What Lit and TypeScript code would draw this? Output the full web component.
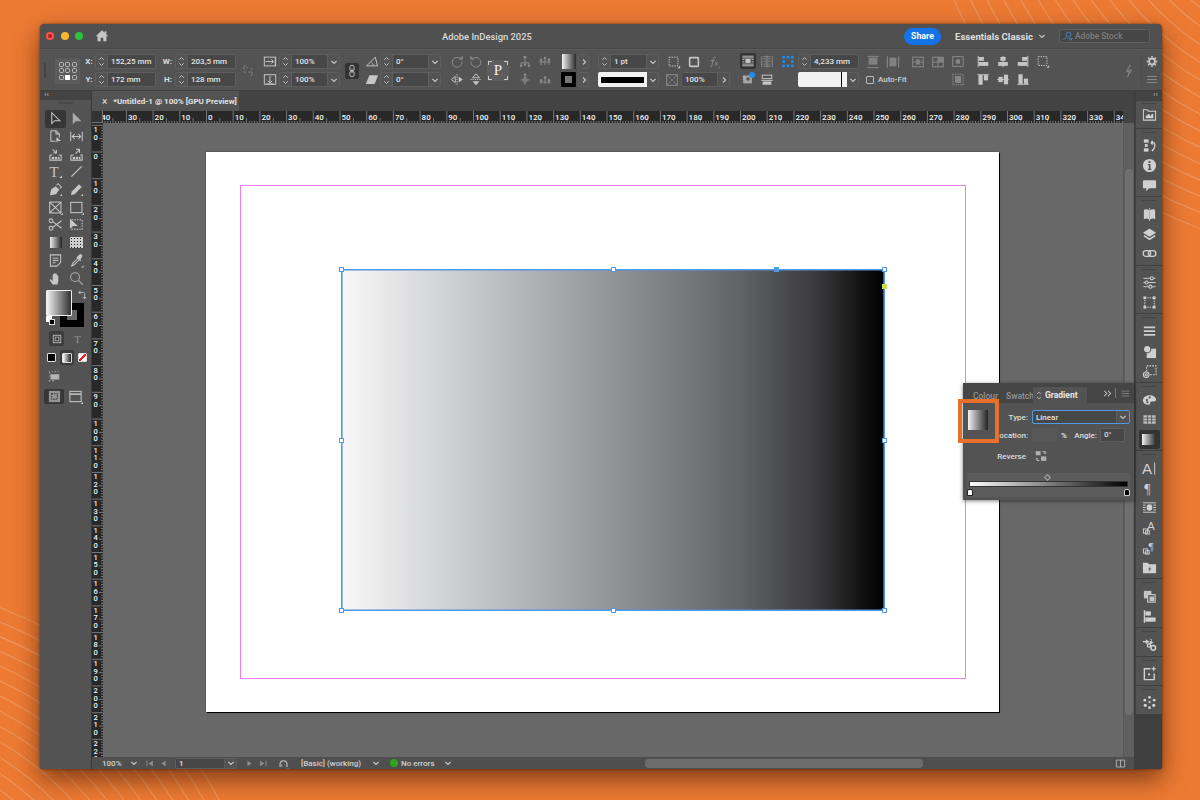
import { css, html, LitElement, svg, type TemplateResult, type SVGTemplateResult } from "lit";
import { customElement } from "lit/decorators.js";

const icons: Record<string, SVGTemplateResult> = {
  home: svg`<path class="f" d="M8 1.5 .8 8.2h2.1V14h3.6v-4h3v4h3.600V8.2h2.100L13 6.200V2.500h-2v1.900z"/>`,
  brokenLink: svg`<path d="M5 2.200 3.400 3.400c-.8.700-.7 1.600 0 2.300l1.200 1.500M7.400 5.600 6 3.600M9 9l1.400 2M11 14l1.600-1.200c.8-.7.700-1.600 0-2.300L11.200 9"/><path d="M3 9.500 5 10M11 6l2 .5"/>`,
  scaleX: svg`<rect x="1.500" y="3" width="13" height="10"/><path d="M3 8h9M9.500 5.500 12 8l-2.500 2.500"/><path d="M14 3v10"/>`,
  scaleY: svg`<rect x="1.500" y="2.500" width="13" height="11"/><path d="M8 4v8M5.500 9.500 8 12l2.500-2.500M4 13h8"/>`,
  chain: svg`<rect x="5.600" y="1.500" width="4.800" height="6.400" rx="2.200"/><rect x="5.600" y="8.100" width="4.800" height="6.400" rx="2.200"/><path d="M8 5.500v5"/>`,
  angle: svg`<path d="M1.800 13h12.400L11.800 3z"/><path d="M9.400 13c0-1.600-.6-2.800-1.800-3.600"/>`,
  shear: svg`<path class="f" d="M5 3h10l-4 10H1z"/>`,
  rotCw: svg`<path d="M12.600 5.600A5.600 5.600 0 1 0 13.600 8"/><path class="f" d="M10 5.800h4.600V1.400z"/>`,
  rotCcw: svg`<path d="M3.400 5.600A5.600 5.600 0 1 1 2.400 8"/><path class="f" d="M6 5.800H1.400V1.400z"/>`,
  flipH: svg`<path d="M6 4.500v7L1.500 8z"/><path class="f" d="M10 4.500v7L14.500 8z"/><path d="M8 2v12" stroke-dasharray="1.400 1.200"/>`,
  flipV: svg`<path d="M4 6h8L8 1.500z"/><path class="f" d="M4 10h8l-4 4.500z"/><path d="M1.500 8h13" stroke-dasharray="1.400 1.200"/>`,
  distA: svg`<circle cx="8" cy="3.200" r="1.700" class="f"/><path d="M8 5v4M3.500 13V9.500h9V13"/><circle cx="3.500" cy="13" r="1.400" class="f"/><circle cx="12.500" cy="13" r="1.400" class="f"/><circle cx="8" cy="11.500" r="1.400" class="f"/>`,
  distB: svg`<path d="M1.500 8.500h13"/><circle cx="3.500" cy="6" r="1.500" class="f"/><circle cx="8" cy="4" r="1.500" class="f"/><circle cx="12.500" cy="6" r="1.500" class="f"/><path d="M3.500 7v5M8 5v7M12.500 7v5"/>`,
  distC: svg`<circle cx="8" cy="2.600" r="1.500" class="f"/><path d="M8 4v10M3 8.500h10"/><circle cx="8" cy="8.500" r="2.600"/>`,
  distD: svg`<path d="M1.500 11h13"/><circle cx="3.500" cy="9" r="1.500" class="f"/><circle cx="8" cy="6" r="1.500" class="f"/><circle cx="12.500" cy="9" r="1.500" class="f"/><path d="M8 7v6M3.500 10v3M12.500 10v3"/>`,
  dashCorner: svg`<rect x="2.500" y="2.500" width="10" height="10" stroke-dasharray="1.600 1.200"/><path class="f" d="M15 15h-3l3-3z"/>`,
  shadowBox: svg`<rect x="3" y="3" width="10" height="10" rx=".8" stroke-width="1.800"/>`,
  fx: svg`<path d="M9.800 2.600C8 2 7.400 3 7 5l-1.400 7c-.3 1.400-1 2-2.300 1.600M4.600 6.500h4.200M9.200 8l3 4M12.200 8l-3 4"/><path class="f" d="M15 15h-2l2-2z"/>`,
  opacity: svg`<rect x="2" y="2" width="12" height="12"/><path d="M2 2l12 12M14 2 2 14" stroke-width=".8"/>`,
  wrapBox: svg`<path d="M1.500 2.500h13M1.500 4.500h13M1.500 6.500h2.500M12 6.500h2.500M1.500 9h2.500M12 9h2.500M1.500 11.500h13M1.500 13.500h13"/><rect class="f" x="5" y="5.600" width="6" height="4.600"/>`,
  wrapNone: svg`<path d="M2 2v12M14 2v12M4 2.500h2M10 2.500h2M4 5h2M10 5h2M4 8h2M10 8h2M4 11h2M10 11h2M4 13.500h2M10 13.500h2"/><rect x="7" y="2" width="2" height="12"/>`,
  tint: svg`<rect class="f" x="2.500" y="4" width="10" height="9" opacity=".72"/><path d="M2 5.500h2M2 8h1" /><circle cx="8" cy="8" r="2" fill="#535353" stroke="none"/>`,
  alignStack: svg`<rect x="2.500" y="3" width="11" height="4"/><path d="M1.500 9h13M3.500 11h9"/><rect class="f" x="3" y="10.500" width="10" height="3.500"/>`,
  fitA: svg`<rect class="f" x="3" y="3" width="10" height="8" opacity=".8"/><path d="M1.500 1.500h13M1.500 14.500h13"/>`,
  fitB: svg`<rect class="f" x="4" y="3" width="8" height="10" opacity=".8"/><path d="M1.500 1.500v13M14.500 1.500v13"/>`,
  fitC: svg`<rect x="2" y="2.500" width="12" height="11"/><rect class="f" x="5.500" y="5" width="5" height="6" opacity=".8"/><path d="M2 8h3M11 8h3"/>`,
  fitD: svg`<rect x="2" y="2.500" width="12" height="11"/><path class="f" d="M8 2.500h6V8H8z" opacity=".8"/><path d="M2 8h12M8 2.500v11"/>`,
  fitE: svg`<rect x="2" y="2.500" width="12" height="11"/><rect class="f" x="5.500" y="5.500" width="5" height="5" opacity=".9"/>`,
  fitF: svg`<rect x="2" y="2" width="12" height="12" stroke-dasharray="1.600 1"/><rect class="f" x="4.500" y="4" width="7" height="8" opacity=".9"/>`,
  alignL: svg`<path d="M2.500 1.500v13"/><rect class="f" x="3" y="2.800" width="6" height="4.400"/><rect class="f" x="3" y="8.600" width="11" height="4.400"/>`,
  alignC: svg`<path d="M8 1.500v13"/><rect class="f" x="5" y="2.800" width="6" height="4.400"/><rect class="f" x="2.500" y="8.600" width="11" height="4.400"/>`,
  alignR: svg`<path d="M13.500 1.500v13"/><rect class="f" x="7" y="2.800" width="6" height="4.400"/><rect class="f" x="2" y="8.600" width="11" height="4.400"/>`,
  alignT: svg`<path d="M1.500 2.500h13"/><rect class="f" x="2.800" y="3" width="4.800" height="11"/><rect class="f" x="9" y="3" width="4.800" height="6"/>`,
  alignM: svg`<path d="M1.500 8h13"/><rect class="f" x="2.800" y="5" width="4.800" height="6"/><rect class="f" x="9" y="2.500" width="4.800" height="11"/>`,
  alignB: svg`<path d="M1.500 13.500h13"/><rect class="f" x="2.800" y="2" width="4.800" height="11"/><rect class="f" x="9" y="7" width="4.800" height="6"/>`,
  bolt: svg`<path d="M9.500 1 5 8.800h3.400L6.600 15M6.500 7 10.800 7 8.600 11"/>`,
  gear: svg`<circle cx="8" cy="8" r="3.400" stroke-width="2.200"/><path stroke-width="1.800" d="M8 1.800v2M8 12.200v2M1.800 8h2M12.200 8h2M3.600 3.600 5 5M11 11l1.400 1.400M3.600 12.400 5 11M11 5l1.400-1.400"/>`,
  menu: svg`<path d="M2.500 4.500h11M2.500 8h11M2.500 11.500h11"/>`,
  search: svg`<circle cx="9.500" cy="5.500" r="3.600"/><path d="M6.800 8.200 2 13M10 11h5l-2.500 2.500z"/>`,
  sel: svg`<path d="M4 1.800v11.600l3-3h5.600z"/>`,
  dsel: svg`<path class="f" d="M4 1.500v12.500l3.200-3.200h6.100z"/>`,
  page: svg`<path d="M3 1.800h5.500L12 5.200V9M3 1.800V13h5"/><path d="M8.500 1.800v3.400H12"/><path class="f" d="M9 8.500v6l1.700-1.600h3.200z"/>`,
  gap: svg`<path d="M1.800 3v10M14.200 3v10M3.500 8h9M6 5.500 3.500 8 6 10.500M10 5.500 12.500 8 10 10.500"/>`,
  collect: svg`<path d="M2 8.500v5.500h12V8.500H11.500M4.500 8.500H2"/><rect class="f" x="4" y="10.500" width="2.400" height="2.400"/><rect class="f" x="7.200" y="10.500" width="2.400" height="2.400"/><rect class="f" x="10.400" y="10.500" width="1.800" height="2.400"/><path d="M5 2.500 9 6.500M9 3v3.500H5.500"/>`,
  place: svg`<path d="M2 8.500v5.500h12V8.500H12M5 8.500H2"/><rect class="f" x="4" y="10.500" width="2.400" height="2.400"/><rect class="f" x="7.200" y="10.500" width="2.400" height="2.400"/><rect class="f" x="10.400" y="10.500" width="1.800" height="2.400"/><path d="M7 7 11 3M7.500 2.500H11.200V6.200"/>`,
  type: svg`<text x="1.500" y="14" class="glyph" font-size="16">T</text><path class="f" d="M15 15h-3l3-3z"/>`,
  line: svg`<path d="M2.500 13.500 13.500 2.500" stroke-width="1.300"/>`,
  pen: svg`<path class="f" d="M2 14l1.400-6.200 5-3.400 3.600 3.600-3.400 5z"/><path d="M9.200 3.400 10.800 1.800l3.400 3.400-1.600 1.600"/><path class="f" d="M15 15h-2.500l2.500-2.500z"/>`,
  pencil: svg`<path class="f" d="M2 14l1-4 7.600-7.600 3 3L6 13z"/><path class="f" d="M15 15h-2.500l2.500-2.500z"/>`,
  frame: svg`<rect x="1.800" y="2.200" width="12" height="11.600"/><path d="M1.800 2.200l12 11.600M13.800 2.200 1.800 13.800"/><path class="f" d="M16 16h-2.500l2.500-2.500z"/>`,
  rect: svg`<rect x="1.800" y="2.500" width="12" height="11"/><path class="f" d="M16 16h-2.500l2.500-2.500z"/>`,
  scissors: svg`<circle cx="3.200" cy="4" r="2"/><circle cx="3.200" cy="12" r="2"/><path d="M5 5 14.500 12M5 11l9.500-7"/>`,
  free: svg`<rect x="3" y="3" width="11" height="10" stroke-dasharray="1.600 1.200"/><path class="f" d="M1 1.500v11l3-3h5.500z"/>`,
  note: svg`<path d="M2.500 2h11v8l-4 4h-7z"/><path d="M5 5.500h6M5 8h6M5 10.500h3"/>`,
  drop: svg`<path d="M10.200 4.800 4 11l-1.200 2.800L5.600 12.600 11.800 6.400"/><path class="f" d="M9 3.600l1.800-1.800c1-1 2.400-.8 3 .2.700.8.600 2-.2 2.800L12 7l1 1-1 .8-4-4 .8-.8z"/><path class="f" d="M15.500 15.500H13l2.500-2.500z"/>`,
  hand: svg`<path class="f" d="M5 14.500 2 10c-.5-.8.600-1.600 1.300-.9L5 10.800V4c0-1 1.500-1 1.500 0v3.500V2.800c0-1 1.500-1 1.500 0v4.700V3.400c0-1 1.500-1 1.500 0v4.300-2.500c0-1 1.500-1 1.500 0v5.800l-1 3.500z"/>`,
  zoom: svg`<circle cx="6.500" cy="6.500" r="4.700"/><path d="M10 10l4.800 4.800" stroke-width="1.400"/>`,
  formatBox: svg`<rect x="2" y="2" width="12" height="12" stroke-width="1.300"/><rect x="5" y="5" width="6" height="6"/>`,
  formatT: svg`<text x="3.500" y="13" class="glyph" font-size="13">T</text>`,
  preview: svg`<path d="M3 3v2M3 7.500v1" /><rect class="f" x="4" y="6" width="10" height="6" opacity=".85"/><path d="M6 3h1M9 3h1M12 3h1M2 13.500h2M6 13.500h2" />`,
  screenNormal: svg`<rect class="f" x="2" y="2" width="12" height="12" opacity=".65"/><rect x="5" y="5" width="6" height="6" stroke="#333" stroke-dasharray="1.500 1"/>`,
  screenMode: svg`<rect x="2" y="2.500" width="12" height="11"/><path d="M2 5.500h12" stroke-width="1.600"/><path class="f" d="M16 16h-2.500l2.500-2.500z"/>`,
  swap: svg`<path d="M5 3.500h6c1 0 1.500.7 1.500 1.500v6"/><path class="f" d="M6.500 1v5L3 3.500zM10 10h5l-2.500 3.500z"/>`,
  first: svg`<path class="f" d="M5 4v8H3.500V4zM13 4v8L6.500 8z"/>`,
  prev: svg`<path class="f" d="M11 4v8L5 8z"/>`,
  next: svg`<path class="f" d="M5 4v8l6-4z"/>`,
  last: svg`<path class="f" d="M11 4v8h1.500V4zM3 4v8l6.500-4z"/>`,
  power: svg`<path d="M3 13V9a5 5 0 0 1 10 0v4" stroke-width="1.600"/><path d="M5.500 13V9" stroke-width="1"/><path class="f" d="M16 15.500h-3l1.500 1z"/>`,
  spread: svg`<path d="M2 3h12v10H2zM8 3v10"/>`,
  more: svg`<path d="M3 4l4 4-4 4M8.500 4l4 4-4 4" stroke-width="1.500"/>`,
  reverse: svg`<rect class="f" x="1" y="1.500" width="6.500" height="5.500" opacity=".8"/><path d="M10 2h3.500v3M11.500 3.500 13.500 5l1.500-1.500"/><rect class="f" x="8" y="8.500" width="7" height="6" opacity=".8"/><path d="M6 14H2.500v-3M1 12.500 2.500 11 4 12.500"/>`,
  folderLib: svg`<path d="M1.500 3h4l1.500 1.500h7.500V14h-13z"/><path class="f" d="M4 12V9h2V7.500h2V9h2V7.500h2V12z"/>`,
  history: svg`<rect class="f" x="2" y="1.500" width="5" height="3.500"/><rect class="f" x="3" y="6.500" width="3" height="3"/><rect class="f" x="2" y="11" width="5" height="3.500"/><path d="M9.500 5h2.500c2.500 0 2.500 6-1.500 9M9.500 5l2-2M9.500 5l2 2" stroke-width="1.400"/>`,
  info: svg`<path class="f" fill-rule="evenodd" d="M8 1a7 7 0 1 0 0 14A7 7 0 0 0 8 1zM7 3.300h2v2H7zM6.300 6.500H9v5h1v1.300H6.300v-1.300h1V7.800h-1z"/>`,
  comment: svg`<path class="f" d="M2 2.500h12c.6 0 1 .4 1 1V10c0 .6-.4 1-1 1H7.500L4.500 14v-3H2c-.6 0-1-.4-1-1V3.500c0-.6.400-1 1-1z"/>`,
  pages: svg`<path class="f" d="M7.500 3.500C6 2 3.500 2.200 2 3v10c1.500-.8 4-1 5.500.5zM8.500 3.500C10 2 12.500 2.200 14 3v10c-1.500-.8-4-1-5.500.5z"/><path d="M8 1v14" stroke-width=".8"/>`,
  layers: svg`<path class="f" d="M8 1.500 15 6l-7 4.500L1 6z"/><path d="M2 9.200 8 13l6-3.800" stroke-width="1.700"/>`,
  links: svg`<rect x="1.200" y="5" width="8" height="6" rx="3" stroke-width="1.400"/><rect x="6.800" y="5" width="8" height="6" rx="3" stroke-width="1.400"/>`,
  sliders: svg`<path d="M1.500 3.500h13M1.500 8h13M1.500 12.500h13" stroke-width="1"/><circle cx="10.500" cy="3.500" r="1.700" fill="#535353"/><circle cx="5" cy="8" r="1.700" fill="#535353"/><circle cx="9" cy="12.500" r="1.700" fill="#535353"/>`,
  transform: svg`<rect x="3" y="3" width="10" height="10" stroke-dasharray="1.400 1.200"/><rect class="f" x="1.500" y="1.500" width="3" height="3"/><rect class="f" x="11.500" y="1.500" width="3" height="3"/><rect class="f" x="1.500" y="11.500" width="3" height="3"/><rect class="f" x="11.500" y="11.500" width="3" height="3"/>`,
  strokeLines: svg`<path d="M2 3.500h12M2 7.500h12M2 11.500h12" stroke-width="1.800"/>`,
  swatchColor: svg`<path class="f" d="M5 5h10v10H5z"/><circle cx="5.500" cy="5.500" r="3.600" class="f" stroke="#535353"/><circle cx="5.500" cy="5.500" r="3.900" fill="none" stroke="#535353"/>`,
  effects: svg`<rect x="5" y="2" width="10" height="9.500" stroke-dasharray="1.800 1.200"/><circle cx="4.500" cy="11.500" r="3" fill="#535353"/><circle cx="4.500" cy="11.500" r="1.200"/>`,
  palette: svg`<path class="f" fill-rule="evenodd" d="M8 3.500c-4 0-7 2.500-7 5.500s3 4.500 6 4.500c1.500 0 2-.8 1.700-1.700-.3-1 .4-1.800 1.600-1.800h2.200c1.500 0 2.500-.7 2.500-1.800C15 5.800 12 3.500 8 3.500zM4 8.500a1.200 1.200 0 1 0 0-.1zM7 5.800a1.200 1.200 0 1 0 0-.1zM4.500 11a1.200 1.200 0 1 0 0-.1z"/>`,
  swatchGrid: svg`<path class="f" d="M1.500 3.500h13v9h-13z" opacity=".85"/><path d="M1.500 6.500h13M1.500 9.500h13M5.800 3.500v9M10.200 3.500v9" stroke="#535353" stroke-width=".9"/>`,
  character: svg`<text x="0" y="13.500" class="thin" font-size="16">A</text><path d="M13.500 1.500v13" stroke-width="1"/>`,
  paragraph: svg`<text x="2.500" y="13.500" class="glyph" font-size="15">¶</text>`,
  textWrap: svg`<path d="M1 3h14M1 5.500h3M12 5.500h3M1 8h3M12 8h3M1 10.500h3M12 10.500h3M1 13h14" stroke-width="1"/><rect class="f" x="5" y="4.500" width="6" height="7" rx="3"/>`,
  charStyle: svg`<text x="5.500" y="10.500" class="thin" font-size="12">A</text><rect x="1.500" y="9.500" width="4.500" height="4.500" stroke-width="1"/><rect x="3.800" y="11.500" width="4" height="3.500" stroke-width="1"/>`,
  paraStyle: svg`<text x="7" y="10.500" class="glyph" font-size="12">¶</text><rect x="1.500" y="9.500" width="4.500" height="4.500" stroke-width="1"/><rect x="3.800" y="11.500" width="4" height="3.500" stroke-width="1"/>`,
  folderBolt: svg`<path class="f" fill-rule="evenodd" d="M1 3h5l1.500 1.500H15V14H1zM9.500 6l-3 4.200h1.700L7 13l3-4H8.300z"/>`,
  pathfinder: svg`<rect class="f" x="2" y="2" width="8" height="8" opacity=".9"/><rect x="6" y="6" width="8" height="8" fill="#535353"/><rect class="f" x="8" y="8" width="5" height="5" opacity=".9"/>`,
  alignPanel: svg`<path d="M2.500 1v14" stroke-width="1.300"/><rect class="f" x="3.500" y="2.500" width="6" height="4.500"/><rect class="f" x="3.500" y="9" width="11" height="4.500"/>`,
  scripts: svg`<path d="M1 5h4" stroke-width="1.500"/><path class="f" d="M4 2.500 8 5 4 7.500z"/><circle cx="7.500" cy="9" r="1.800" stroke-width="1.500"/><circle cx="12" cy="11.500" r="2.500" stroke-width="1.600"/><path class="f" d="M8 1.500l3 1.500-3 2 1 3 3-2z"/>`,
  spark: svg`<path d="M9 3H2.500v11.500H13V8" stroke-width="1.500"/><path class="f" d="M12.500 0l.8 2.200 2.200.8-2.200.8-.8 2.200-.8-2.200L9.500 3l2.200-.8z"/><circle class="f" cx="7.500" cy="9" r="1.200"/>`,
  dots: svg`<g class="f"><circle cx="8" cy="2.500" r="1.500"/><circle cx="3" cy="5.500" r="1.500"/><circle cx="13" cy="5.500" r="1.500"/><circle cx="3.500" cy="11" r="1.700"/><circle cx="12.500" cy="11" r="1.700"/><circle cx="8" cy="13.500" r="1.500"/><circle cx="8" cy="7.500" r="1.200"/></g>`,
};

const ic = (name: string, cls = ""): TemplateResult =>
  html`<svg class="ic ${cls}" viewBox="0 0 16 16">${icons[name]}</svg>`;

const chev = html`<svg class="chev" viewBox="0 0 8 8"><path d="M1.300 2.800 4 5.500l2.700-2.700" /></svg>`;
const spin = html`<span class="spin"><svg viewBox="0 0 8 12"><path d="M1.500 4 4 1.500 6.500 4M1.500 8 4 10.500 6.500 8" /></svg></span>`;

const field = (value: string, dd = false) =>
  html`<div class="field">${spin}<span class="val">${value}</span>${dd ? html`<span class="dd">${chev}</span>` : ""}</div>`;
const label = (t: string) => html`<span class="lb">${t}</span>`;
const caret = html`<div class="caret"><svg class="chev" viewBox="0 0 8 8"><path d="M3 1.500 5.500 4 3 6.500" /></svg></div>`;

// width, then top and bottom row (one entry means it is centred on both rows)
type Col = [number, TemplateResult?, TemplateResult?];

const refPoint = html`<div class="ref">
  ${[0, 1, 2, 3, 4, 5, 6, 7, 8].map((i) => html`<i class=${i === 7 ? "on" : ""}></i>`)}
</div>`;

const controlCols: Col[] = [
  [4], [1, html`<div class="grip-v"></div>`], [10],
  [25, refPoint], [3],
  [12, label("X:"), label("Y:")],
  [61, field("152,25 mm"), field("172 mm")],
  [19, html`<span class="lb right">W:</span>`, html`<span class="lb right">H:</span>`],
  [61, field("203,5 mm"), field("128 mm")],
  [24, ic("brokenLink", "dim")],
  [19, ic("scaleX"), ic("scaleY")],
  [61, field("100%", true), field("100%", true)],
  [24, html`<div class="chainbtn">${ic("chain")}</div>`],
  [16, ic("angle"), ic("shear")],
  [61, field("0°", true), field("0°", true)],
  [7],
  [18, ic("rotCw", "dim"), ic("flipH")],
  [20, ic("rotCcw", "dim"), ic("flipV")],
  [29, html`<div class="ptool"><span>P</span><b class="tl"></b><b class="tr"></b><b class="bl"></b><b class="br"></b></div>`],
  [20, ic("distA", "dim"), ic("distC", "dim")],
  [20, ic("distB", "dim"), ic("distD", "dim")],
  [6],
  [15, html`<div class="gswatch"></div>`, html`<div class="kswatch"></div>`],
  [2],
  [11, caret, caret],
  [9],
  [61, field("1 pt", true), html`<div class="strokefield"><div class="strokebox"><i></i></div><span class="dd">${chev}</span></div>`],
  [6],
  [66,
    html`<div class="row icons3">${ic("dashCorner")}${ic("shadowBox")}${ic("fx", "dim")}</div>`,
    html`<div class="row">${ic("opacity", "dim")}<div class="field pct"><span class="val">100%</span><span class="dd"><svg class="chev" viewBox="0 0 8 8"><path d="M3 1.500 5.500 4 3 6.500" /></svg></span></div></div>`],
  [9],
  [16, html`<div class="active">${ic("wrapBox")}</div>`, html`<div class="dotwrap">${ic("tint")}<i></i></div>`],
  [22, ic("wrapNone", "dim"), ic("alignStack")],
  [20, html`<svg class="ic blue" viewBox="0 0 16 16">${[[3, 3], [13, 3], [3, 13], [13, 13], [3, 8], [13, 8], [8, 3], [8, 13]].map(([x, y]) => svg`<rect x=${x - 1.5} y=${y - 1.5} width="3" height="3"/>`)}</svg>`, html`<span></span>`],
  [61, field("4,233 mm"), html`<div class="strokefield"><div class="strokebox wide"><i></i></div><span class="dd">${chev}</span></div>`],
  [7],
  [41,
    html`<div class="row gap4">${ic("fitA", "dim")}${ic("fitB", "dim")}</div>`,
    html`<div class="row nowrap"><i class="check"></i><span class="autofit">Auto-Fit</span></div>`],
  [4],
  [38, html`<div class="row gap4">${ic("fitC", "dim")}${ic("fitD", "dim")}</div>`, html`<span></span>`],
  [18, ic("fitE", "dim"), ic("fitF", "dim")],
  [6],
  [20, ic("alignL"), ic("alignT")],
  [20, ic("alignC"), ic("alignM")],
  [20, ic("alignR"), ic("alignB")],
  [20, ic("dashCorner"), html`<span></span>`],
];

const statusCols: Col[] = [
  [10],
  [24, html`<span class="st left">100%</span>`],
  [16, chev],
  [14, ic("first", "dim sm")],
  [15, ic("prev", "dim sm")],
  [4],
  [62, html`<div class="field page"><span class="val">1</span><span class="dd">${chev}</span></div>`],
  [5],
  [14, ic("next", "dim sm")],
  [14, ic("last", "dim sm")],
  [5],
  [16, ic("power", "sm")],
  [10],
  [60, html`<span class="st left">[Basic] (working)</span>`],
  [7],
  [16, chev],
  [6],
  [8, html`<i class="green"></i>`],
  [3],
  [40, html`<span class="st left">No errors</span>`],
  [14, chev],
];

const tools: string[] = ["page", "gap", "collect", "place", "type", "line", "pen", "pencil", "frame", "rect", "scissors", "free"];

const dockGroups: string[][] = [
  ["folderLib"],
  ["history", "info", "comment"],
  ["pages", "layers", "links"],
  ["sliders", "transform"],
  ["strokeLines", "swatchColor", "effects"],
  ["palette", "swatchGrid", "gradient"],
  ["character", "paragraph", "textWrap", "charStyle", "paraStyle", "folderBolt"],
  ["pathfinder", "alignPanel"],
  ["scripts"],
  ["spark"],
  ["dots"],
];

const MM = 26.7; // ten millimetres of ruler on screen
const ORIGIN_X = 103.5;
const ORIGIN_Y = 29;

function hRuler() {
  const ticks: string[] = [];
  const labels = [];
  for (let n = -4; n <= 34; n++) {
    const x = ORIGIN_X + n * MM;
    ticks.push(`M${x} 0v12`);
    for (let m = 1; m < 10; m++) {
      const tx = x + (m * MM) / 10;
      ticks.push(`M${tx} ${m === 5 ? 7 : 10}V12`);
    }
    labels.push(svg`<text x=${x + 1.5} y="8.500">${Math.abs(n * 10)}</text>`);
  }
  return html`<svg class="hruler" viewBox="0 0 1020 12" width="1020" height="12">
    <path d=${ticks.join("")} />${labels}
  </svg>`;
}

function vRuler() {
  const ticks: string[] = [];
  const labels: SVGTemplateResult[] = [];
  for (let n = -1; n <= 23; n++) {
    const y = ORIGIN_Y + n * MM;
    ticks.push(`M0 ${y}h11`);
    for (let m = 1; m < 10; m++) {
      const ty = y + (m * MM) / 10;
      ticks.push(`M${m === 5 ? 7 : 9} ${ty}H11`);
    }
    [...String(Math.abs(n * 10))].forEach((d, i) => {
      labels.push(svg`<text x="1.500" y=${y + 7 + i * 7.5}>${d}</text>`);
    });
  }
  return html`<svg class="vruler" viewBox="0 0 11 634" width="11" height="634">
    <path d=${ticks.join("")} />${labels}
  </svg>`;
}

function arcs(cx: number, cy: number, from: number, to: number, step: number) {
  const out = [];
  for (let r = from; r <= to; r += step) {
    out.push(svg`<circle cx=${cx} cy=${cy} r=${r} />`);
  }
  return out;
}

@customElement("app-root")
export class AppRoot extends LitElement {
  private renderCols(cols: Col[], cls: string) {
    return cols.map(
      ([w, a, b]) => html`<div class="${cls}" style="width:${w}px">${a ?? ""}${b ?? ""}</div>`,
    );
  }

  private renderDockIcon(name: string) {
    if (name === "gradient") {
      return html`<div class="dock-item"><div class="dock-active"><div class="gicon"></div></div></div>`;
    }
    return html`<div class="dock-item">${ic(name, "big")}</div>`;
  }

  render() {
    return html`
      <svg class="bg" viewBox="0 0 1200 800">
        ${arcs(1350, -180, 120, 440, 15)} ${arcs(-150, 1000, 150, 420, 13.5)}
      </svg>
      <div class="window">
        <header class="titlebar">
          <div class="lights"><i class="red"></i><i class="yellow"></i><i class="green-l"></i></div>
          <div class="home">${ic("home")}</div>
          <div class="title">Adobe InDesign 2025</div>
          <div class="share">Share</div>
          <div class="workspace">Essentials Classic</div>
          ${chev}
          <div class="search">
            <svg class="ic searchic" viewBox="0 0 16 16">${icons.search}</svg>
            <span>Adobe Stock</span>
          </div>
        </header>

        <section class="control">
          ${this.renderCols(controlCols, "col")}
          <div class="control-end">
            <div class="bolt">${ic("bolt", "dim")}</div>
            <div class="col endcol">${ic("gear")}${ic("menu", "dim")}</div>
          </div>
        </section>

        <div class="main">
          <aside class="tools">
            <div class="collapse"><span>‹‹</span></div>
            <div class="grip"></div>
            <div class="toolgrid">
              <div class="tool on">${ic("sel")}</div>
              <div class="tool">${ic("dsel", "dim2")}</div>
              ${tools.map((t) => html`<div class="tool">${ic(t)}</div>`)}
              <div class="tool"><div class="gtool"></div></div>
              <div class="tool"><div class="ftool"></div></div>
              <div class="tool">${ic("note")}</div>
              <div class="tool">${ic("drop")}</div>
              <div class="tool">${ic("hand")}</div>
              <div class="tool">${ic("zoom", "dim2")}</div>
            </div>
            <div class="fillstroke">
              <div class="stroke"><i></i></div>
              <div class="fill"></div>
              <div class="swap">${ic("swap", "sm")}</div>
              <div class="defaults"><i></i><b></b></div>
            </div>
            <div class="toolrow fmt">
              <div class="fmtbox">${ic("formatBox", "sm2")}</div>
              ${ic("formatT", "dim")}
            </div>
            <div class="toolrow applyrow">
              <div class="apply black"></div>
              <div class="apply-on"><div class="apply grad"></div></div>
              <div class="apply none"></div>
            </div>
            <div class="toolrow previewrow">${ic("preview")}</div>
            <div class="toolrow screen">
              <div class="tool on">${ic("screenNormal")}</div>
              <div class="tool">${ic("screenMode")}</div>
            </div>
          </aside>

          <div class="doc">
            <div class="tabs">
              <div class="tab"><span class="x">×</span><span>*Untitled-1 @ 100% [GPU Preview]</span></div>
            </div>
            <div class="ruler-row">
              <div class="corner"></div>
              <div class="ruler-h">${hRuler()}</div>
              <div class="ruler-end"></div>
            </div>
            <div class="canvas-row">
              <div class="ruler-v">${vRuler()}</div>
              <div class="canvas">
                <div class="sheet"><div class="margins"></div></div>
                <div class="frame">
                  <i class="h tl"></i><i class="h tm"></i><i class="h tr"></i>
                  <i class="h ml"></i><i class="h mr"></i>
                  <i class="h bl"></i><i class="h bm"></i><i class="h br"></i>
                  <i class="h blue-h"></i><i class="h port"></i>
                </div>
              </div>
              <div class="vscroll"><div class="vthumb"></div></div>
            </div>
            <footer class="status">
              ${this.renderCols(statusCols, "scell")}
              <div class="hscroll"><div class="hthumb"></div></div>
              <div class="spread">${ic("spread", "sm")}</div>
            </footer>
          </div>

          <aside class="dock">
            <div class="collapse right"><span>‹‹</span></div>
            ${dockGroups.map(
              (g) => html`<div class="dgroup">
                <div class="grip"></div>
                ${g.map((n) => this.renderDockIcon(n))}
              </div>`,
            )}
          </aside>
        </div>

        <div class="panel">
          <div class="ptabs">
            <span class="ptab colour">Colour</span>
            <span class="ptab swatches">Swatches</span>
            <span class="ptab current"><svg class="pspin" viewBox="0 0 8 12"><path d="M1.500 4 4 1.500 6.500 4M1.500 8 4 10.500 6.500 8" /></svg>Gradient</span>
            <span class="pmore">${ic("more", "sm")}</span>
            <i class="pbar"></i>
            <span class="pmenu">${ic("menu", "sm dim")}</span>
          </div>
          <div class="pbody">
            <div class="pthumb"></div>
            <div class="pform">
              <div class="prow">
                <span class="plabel">Type:</span>
                <div class="pselect"><span>Linear</span><span class="pdd">${chev}</span></div>
              </div>
              <div class="prow loc">
                <span class="plabel">Location:</span>
                <div class="pinput"></div>
                <span class="pct-sign">%</span>
                <span class="plabel angle">Angle:</span>
                <div class="pinput dark">0°</div>
              </div>
              <div class="prow rev">
                <span class="plabel">Reverse</span>
                ${ic("reverse", "revic")}
              </div>
            </div>
          </div>
          <div class="slider">
            <i class="diamond"></i>
            <div class="gbar"></div>
            <div class="stops"><i class="stop w"></i><i class="stop k"></i></div>
          </div>
        </div>
        <div class="callout"></div>
      </div>
    `;
  }

  static styles = css`
    :host {
      display: block;
      position: relative;
      width: 1200px;
      height: 800px;
      box-sizing: border-box;
      padding: 24px 38px 31px 40px;
      overflow: hidden;
      background: #ec7a33;
      font-family: Roboto, "Liberation Sans", sans-serif;
      font-size: 8px;
      font-weight: 500;
      color: #dcdcdc;
    }
    * { box-sizing: border-box; }
    i { display: block; font-style: normal; }
    svg { display: block; flex: none; }

    .bg {
      position: absolute;
      inset: 0;
      width: 1200px;
      height: 800px;
      fill: none;
      stroke: rgba(255, 255, 255, 0.2);
      stroke-width: 1.2;
    }
    .ic {
      width: 14px;
      height: 14px;
      fill: none;
      stroke: #c6c6c6;
      stroke-width: 1.1;
      color: #c6c6c6;
    }
    .ic .f, .ic g.f { fill: currentColor; stroke: none; }
    .ic.dim { stroke: #8c8c8c; color: #8c8c8c; }
    .ic.dim2 { stroke: #aaa; color: #aaa; }
    .ic.sm { width: 11px; height: 11px; }
    .ic.big { width: 15px; height: 15px; stroke: #d0d0d0; color: #d0d0d0; }
    .ic.blue { color: #1e8ef0; }
    .ic.blue rect { fill: #1e8ef0; stroke: none; }
    .ic .glyph, .ic .thin {
      fill: currentColor;
      stroke: none;
      font-family: "Liberation Serif", serif;
      font-weight: 400;
    }
    .ic .thin { font-family: "Liberation Sans", sans-serif; }
    .chev {
      width: 8px;
      height: 8px;
      fill: none;
      stroke: #c6c6c6;
      stroke-width: 1.2;
    }

    .window {
      position: relative;
      display: flex;
      flex-direction: column;
      width: 1122px;
      height: 745px;
      border-radius: 5px 5px 2px 2px;
      background: #4b4b4b;
      box-shadow: 0 10px 24px rgba(50, 18, 0, 0.6), 0 0 3px rgba(40, 15, 0, 0.6);
      overflow: hidden;
    }

    /* title bar */
    .titlebar {
      display: flex;
      align-items: center;
      flex: none;
      height: 25px;
      background: #505050;
      border-bottom: 1px solid #474747;
    }
    .lights { display: flex; gap: 6.5px; margin-left: 6px; width: 48px; }
    .lights i { width: 8px; height: 8px; border-radius: 50%; }
    .red { background: #f2564e; box-shadow: inset 0 0 0 2px #f2564e, inset 0 0 0 4px #a5241e; }
    .yellow { background: #f5b82e; }
    .green-l { background: #2fc240; }
    .home { width: 348px; padding-left: 1px; }
    .title { width: 100px; color: #d8d8d8; font-size: 9.4px; white-space: nowrap; }
    .share {
      margin-left: 362px;
      width: 37px;
      height: 17px;
      border-radius: 9px;
      background: #1473e6;
      color: #fff;
      font-weight: 700;
      font-size: 8.8px;
      text-align: center;
      line-height: 17px;
    }
    .workspace {
      margin: 0 6px 0 14px;
      width: 77px;
      font-weight: 700;
      font-size: 9.6px;
      white-space: nowrap;
      color: #dedede;
    }
    .search {
      display: flex;
      align-items: center;
      gap: 2px;
      width: 91px;
      height: 14px;
      margin-left: 13px;
      padding-left: 2px;
      background: #464646;
      border: 1px solid #5e5e5e;
      border-radius: 2px;
      color: #7d7d7d;
      font-size: 8.4px;
    }
    .searchic { width: 11px; height: 11px; stroke: #3f8fe0; }

    /* control bar */
    .control {
      display: flex;
      flex: none;
      height: 42px;
      padding-top: 4px;
      background: #535353;
      border-top: 1px solid #5c5c5c;
      border-bottom: 1px solid #3f3f3f;
    }
    .col {
      display: flex;
      flex: none;
      flex-direction: column;
      align-items: center;
      justify-content: center;
      gap: 3px;
      height: 33px;
    }
    .col > * { min-height: 15px; }
    .grip-v { width: 2px; height: 12px; background: #444; }
    .lb { width: 100%; line-height: 15px; text-align: center; font-weight: 700; }
    .lb.right { text-align: right; padding-right: 3px; }
    .ref {
      display: grid;
      grid-template-columns: repeat(3, 5px);
      gap: 1.5px;
      place-content: center;
      width: 25px;
      height: 26px;
      background: #5c5c5c;
    }
    .ref i { height: 5px; border: 1px solid #bdbdbd; border-radius: 1.5px; }
    .ref i.on { background: #fff; border-color: #fff; border-radius: 0; }
    .field {
      display: flex;
      align-items: center;
      width: 100%;
      height: 15px;
      background: #474747;
      border: 1px solid #5e5e5e;
      border-radius: 2px;
      color: #e2e2e2;
    }
    .spin {
      display: flex;
      align-items: center;
      justify-content: center;
      flex: none;
      width: 12px;
      height: 100%;
      background: #535353;
      border-right: 1px solid #5e5e5e;
    }
    .spin svg, .pspin { width: 7px; height: 11px; fill: none; stroke: #c6c6c6; stroke-width: 1.1; }
    .val { flex: 1; padding-left: 3px; white-space: nowrap; }
    .dd {
      display: flex;
      align-items: center;
      justify-content: center;
      flex: none;
      width: 12px;
      height: 100%;
      background: #535353;
      border-left: 1px solid #5e5e5e;
    }
    .chainbtn {
      display: flex;
      align-items: center;
      justify-content: center;
      width: 14px;
      height: 16px;
      border-radius: 2px;
      background: #333;
    }
    .ptool {
      position: relative;
      display: flex;
      align-items: center;
      justify-content: center;
      width: 22px;
      height: 21px;
      margin-right: 5px;
      border-radius: 3px;
      background: #5d5d5d;
      font: 400 15px "Liberation Serif", serif;
      color: #f2f2f2;
    }
    .ptool b { position: absolute; width: 4px; height: 4px; border: 1px solid #ccc; }
    .ptool .tl { top: 1px; left: 1px; border-right: 0; border-bottom: 0; }
    .ptool .tr { top: 1px; right: 1px; border-left: 0; border-bottom: 0; }
    .ptool .bl { bottom: 1px; left: 1px; border-right: 0; border-top: 0; }
    .ptool .br { bottom: 1px; right: 1px; border-left: 0; border-top: 0; }
    .gswatch {
      width: 14px;
      height: 15px;
      background: linear-gradient(90deg, #f4f4f4, #2a2a2a);
    }
    .kswatch {
      width: 15px;
      height: 15px;
      background: #777;
      border: 4px solid #000;
      border-radius: 1px;
    }
    .caret {
      display: flex;
      align-items: center;
      justify-content: center;
      width: 11px;
      height: 15px;
      border: 1px solid #5e5e5e;
      border-radius: 2px;
    }
    .strokefield { display: flex; width: 100%; height: 15px; border-radius: 2px; overflow: hidden; }
    .strokefield .dd { border: 1px solid #5e5e5e; border-left: 0; }
    .strokebox {
      display: flex;
      align-items: center;
      flex: 1;
      padding: 0 3px;
      background: #f2f2f2;
    }
    .strokebox i { width: 100%; height: 6px; background: #000; }
    .strokebox.wide { padding: 0 5px 0 0; justify-content: flex-end; }
    .strokebox.wide i { flex: none; width: 1.5px; height: 100%; }
    .row { display: flex; align-items: center; width: 100%; }
    .icons3 { gap: 6px; padding-left: 2px; }
    .gap4 { gap: 6px; }
    .nowrap { white-space: nowrap; }
    .pct { width: 49px; margin-left: 2px; }
    .active {
      display: flex;
      align-items: center;
      justify-content: center;
      width: 16px;
      height: 17px;
      margin-top: -1px;
      background: #333;
      border-radius: 2px;
    }
    .dotwrap { position: relative; }
    .dotwrap i {
      position: absolute;
      top: 0;
      right: 0;
      width: 6px;
      height: 6px;
      border-radius: 50%;
      background: #1e8ef0;
    }
    .check { flex: none; width: 8px; height: 8px; border: 1px solid #bbb; border-radius: 1px; margin-right: 4px; }
    .autofit { color: #cfcfcf; }
    .control-end { display: flex; margin-left: auto; }
    .bolt { display: flex; align-items: center; padding: 0 5px; height: 33px; }
    .endcol { width: 21px; border-left: 1px solid #4e4e4e; }

    /* main area */
    .main { display: flex; flex: 1; min-height: 0; }
    .tools {
      flex: none;
      width: 52px;
      background: #535353;
      border-right: 1px solid #3a3a3a;
    }
    .collapse {
      height: 9px;
      background: #434343;
      color: #aaa;
      font-size: 8px;
      line-height: 8px;
      padding-left: 4px;
    }
    .collapse.right { text-align: right; padding-right: 4px; }
    .grip { height: 2px; width: 14px; margin: 2px auto 0; background: #494949; }
    .toolgrid {
      display: grid;
      grid-template-columns: repeat(2, 21px);
      grid-auto-rows: 17.7px;
      padding: 6px 0 0 5px;
    }
    .tool { display: flex; align-items: center; justify-content: center; height: 100%; }
    .tool .ic { width: 15px; height: 15px; }
    .tool.on { background: #363636; border-radius: 2px; }
    .gtool { width: 12px; height: 11px; background: linear-gradient(90deg, #ededed, #222); }
    .ftool {
      width: 13px;
      height: 11px;
      background: radial-gradient(circle, #222 0, #222 0.8px, transparent 1px) 0 0 / 3px 3px, #cfcfcf;
    }
    .fillstroke { position: relative; height: 40px; margin-top: 3px; }
    .fill {
      position: absolute;
      left: 6px;
      top: 0;
      width: 26px;
      height: 26px;
      border: 1.5px solid #f0f0f0;
      border-radius: 1px;
      background: linear-gradient(90deg, #f2f2f2, #303030);
    }
    .stroke {
      position: absolute;
      left: 20px;
      top: 13px;
      width: 24px;
      height: 24px;
      background: #000;
      padding: 7px;
    }
    .stroke i { width: 100%; height: 100%; background: #666; }
    .swap { position: absolute; left: 36px; top: 0; }
    .defaults { position: absolute; left: 6px; top: 26px; width: 9px; height: 9px; }
    .defaults i { width: 6px; height: 6px; background: #fff; }
    .defaults b { position: absolute; right: 0; bottom: 0; width: 6px; height: 6px; background: #000; border: 1px solid #ddd; }
    .toolrow { display: flex; align-items: center; }
    .fmt { height: 16px; margin-top: 1px; padding-left: 9px; gap: 7px; }
    .fmtbox {
      display: flex;
      align-items: center;
      justify-content: center;
      width: 15px;
      height: 15px;
      border-radius: 2px;
      background: #3c3c3c;
    }
    .ic.sm2 { width: 10px; height: 10px; }
    .applyrow { height: 16px; margin-top: 3px; padding-left: 7px; gap: 3px; }
    .apply { width: 9px; height: 9px; border-radius: 1px; border: 1px solid #ddd; }
    .apply.black { background: #000; margin-right: 1px; }
    .apply.grad { width: 10px; height: 10px; background: linear-gradient(90deg, #fff, #222); }
    .apply-on {
      display: flex;
      align-items: center;
      justify-content: center;
      width: 14px;
      height: 15px;
      background: #3c3c3c;
      border-radius: 2px;
    }
    .apply.none {
      margin-left: 1px;
      background: linear-gradient(135deg, #fff 42%, #f01818 42%, #f01818 58%, #fff 58%);
    }
    .previewrow { height: 16px; margin-top: 2px; padding-left: 7px; }
    .screen {
      height: 15px;
      margin-top: 5px;
      padding-left: 4px;
      display: grid;
      grid-template-columns: 20px 23px;
    }

    .doc { display: flex; flex-direction: column; flex: none; width: 1042px; }
    .tabs { display: flex; flex: none; height: 20px; background: #434343; }
    .tab {
      display: flex;
      align-items: center;
      gap: 6px;
      width: 147px;
      padding-left: 10px;
      background: #535353;
      white-space: nowrap;
      font-weight: 700;
      font-size: 8px;
      color: #e2e2e2;
    }
    .x { font-size: 10px; font-weight: 400; }
    .ruler-row { display: flex; flex: none; height: 12px; background: #282828; }
    .corner { width: 11px; border-right: 1px solid #777; border-bottom: 1px solid #777; background: #333; }
    .ruler-h { width: 1020px; overflow: hidden; }
    .ruler-end { width: 11px; background: #434343; }
    .hruler path, .vruler path { stroke: #9a9a9a; stroke-width: 0.7; fill: none; }
    .hruler text, .vruler text { fill: #f4f4f4; font-size: 8px; font-weight: 500; }
    .vruler text { font-size: 7.5px; }
    .canvas-row { display: flex; flex: 1; min-height: 0; }
    .ruler-v { width: 11px; background: #282828; overflow: hidden; }
    .canvas {
      position: relative;
      flex: 1;
      min-width: 0;
      background: #686868;
      overflow: hidden;
    }
    .sheet {
      position: absolute;
      left: 103px;
      top: 29px;
      width: 793px;
      height: 560px;
      background: #fff;
      box-shadow: 1px 1px 0 #000, 0 0 2px rgba(0, 0, 0, 0.4);
    }
    .margins {
      position: absolute;
      left: 33.5px;
      top: 33px;
      width: 726px;
      height: 494px;
      border: 1px solid #ea7fea;
    }
    .frame {
      position: absolute;
      left: 238px;
      top: 146px;
      width: 544px;
      height: 342px;
      box-shadow: inset 0 0 0 1.6px #4f9ae8;
      background: linear-gradient(90deg, #f8f8f8 0%, #cbccce 22%, #a6a7ab 40%, #828386 58%, #606164 74%, #38383a 88%, #101010 96%, #000 100%);
    }
    .h {
      position: absolute;
      width: 5px;
      height: 5px;
      background: #fff;
      border: 1px solid #4f9ae8;
    }
    .tl { left: -2px; top: -2px; }
    .tm { left: 270px; top: -2px; }
    .tr { right: -2px; top: -2px; }
    .ml { left: -2px; top: 169px; }
    .mr { right: -2px; top: 169px; }
    .bl { left: -2px; bottom: -2px; }
    .bm { left: 270px; bottom: -2px; }
    .br { right: -2px; bottom: -2px; }
    .blue-h { left: 433px; top: -2px; background: #4f9ae8; }
    .port { right: -2px; top: 15px; background: #c6e34a; border-color: #c6e34a; }
    .vscroll { width: 11px; background: #5f5f5f; padding: 46px 1px 42px 1px; border-left: 1px solid #575757; }
    .vthumb { height: 100%; background: #6f6f6f; border-radius: 5px; }

    .status {
      display: flex;
      align-items: center;
      flex: none;
      height: 12px;
      background: #4f4f4f;
    }
    .scell { display: flex; flex: none; align-items: center; justify-content: center; height: 100%; }
    .st { white-space: nowrap; font-size: 8px; color: #d2d2d2; }
    .st.left { width: 100%; }
    .field.page { height: 11px; }
    .field.page .dd { width: 12px; }
    .green { width: 8px; height: 8px; border-radius: 50%; background: #2ca51c; }
    .hscroll { flex: 1; height: 100%; padding: 2px 0 1px 190px; }
    .hthumb { width: 278px; height: 100%; border-radius: 4px; background: #6c6c6c; }
    .spread { display: flex; align-items: center; padding: 0 8px; }

    .dock {
      flex: none;
      width: 28px;
      padding-left: 2px;
      background: #3f3f3f;
      display: flex;
      flex-direction: column;
      gap: 1px;
    }
    .dgroup { background: #535353; padding-bottom: 1px; }
    .dock .grip { margin: 3px auto 3px; height: 1px; background: #454545; }
    .collapse + .dgroup { padding-bottom: 3px; }
    .collapse + .dgroup .grip { margin: 2px auto 1px; }
    .dock-item { display: flex; align-items: center; justify-content: center; height: 19.84px; }
    .dock-active {
      display: flex;
      align-items: center;
      justify-content: center;
      width: 21px;
      height: 19px;
      background: #333;
      border-radius: 2px;
    }
    .gicon { width: 14px; height: 11px; background: linear-gradient(90deg, #f0f0f0, #2a2a2a); }

    /* floating gradient panel */
    .panel {
      position: absolute;
      left: 923px;
      top: 359px;
      display: flex;
      flex-direction: column;
      width: 171px;
      height: 117px;
      background: #535353;
      box-shadow: 0 1px 4px rgba(0, 0, 0, 0.5);
    }
    .ptabs {
      display: flex;
      align-items: flex-end;
      flex: none;
      height: 20px;
      background: #454545;
    }
    .ptab { height: 16px; line-height: 18px; white-space: nowrap; overflow: hidden; color: #949494; font-size: 8.5px; }
    .colour { width: 43px; padding-left: 10px; }
    .swatches { width: 27px; }
    .current {
      display: flex;
      align-items: center;
      gap: 3px;
      width: 54px;
      padding-left: 3px;
      background: #535353;
      color: #e8e8e8;
      font-weight: 700;
      line-height: 16px;
    }
    .pspin { width: 6px; height: 9px; }
    .pmore { align-self: center; margin-left: 15px; }
    .pbar { align-self: center; width: 1px; height: 10px; margin-left: 2px; background: #777; }
    .pmenu { align-self: center; margin-left: 4px; }
    .pbody { position: relative; display: flex; flex: 1; }
    .pthumb {
      width: 20px;
      height: 20px;
      margin: 7px 0 0 5px;
      flex: none;
      background: linear-gradient(90deg, #f4f4f4, #222);
    }
    .pform { flex: 1; padding: 7px 4px 0 0; display: flex; flex-direction: column; }
    .prow { display: flex; align-items: center; height: 14px; margin-left: -25px; }
    .plabel { width: 65px; flex: none; text-align: right; white-space: nowrap; color: #dcdcdc; }
    .pselect {
      display: flex;
      align-items: center;
      justify-content: space-between;
      width: 98px;
      height: 14px;
      margin-left: 4px;
      background: #474747;
      border: 1px solid #4f9ae8;
      border-radius: 2px;
      padding-left: 3px;
      color: #e0e0e0;
    }
    .pdd { display: flex; align-items: center; justify-content: center; width: 13px; height: 100%; background: #535353; border-left: 1px solid #5e5e5e; }
    .loc { margin-top: 4px; }
    .pinput { width: 25px; height: 14px; margin-left: 4px; background: #585858; }
    .pct-sign { margin-left: 4px; font-weight: 700; }
    .angle { width: 30px; }
    .pinput.dark {
      margin-left: 3px;
      padding-left: 3px;
      background: #474747;
      border: 1px solid #5e5e5e;
      line-height: 12px;
    }
    .rev { margin-top: 7px; margin-left: -27px; }
    .revic { width: 12px; height: 12px; margin-left: 9px; }
    .slider {
      position: relative;
      flex: none;
      height: 24px;
      margin: 0 4px 3px;
      padding: 8px 2px 0;
      background: #5c5c5c;
    }
    .diamond {
      position: absolute;
      left: 78px;
      top: 2px;
      width: 5px;
      height: 5px;
      border: 1px solid #aaa;
      transform: rotate(45deg);
    }
    .gbar { height: 6px; background: linear-gradient(90deg, #fff, #000); border: 1px solid #333; }
    .stops { display: flex; justify-content: space-between; margin: 2px -2px 0; }
    .stop {
      width: 6px;
      height: 7px;
      border: 1px solid #222;
      border-radius: 2px 2px 0 0;
    }
    .stop.w { background: #fff; }
    .stop.k { background: #000; border-color: #ccc; }
    .callout {
      position: absolute;
      left: 918px;
      top: 375px;
      width: 41px;
      height: 44px;
      border: 4px solid #e8702a;
    }
  `;
}

declare global {
  interface HTMLElementTagNameMap {
    "app-root": AppRoot;
  }
}
